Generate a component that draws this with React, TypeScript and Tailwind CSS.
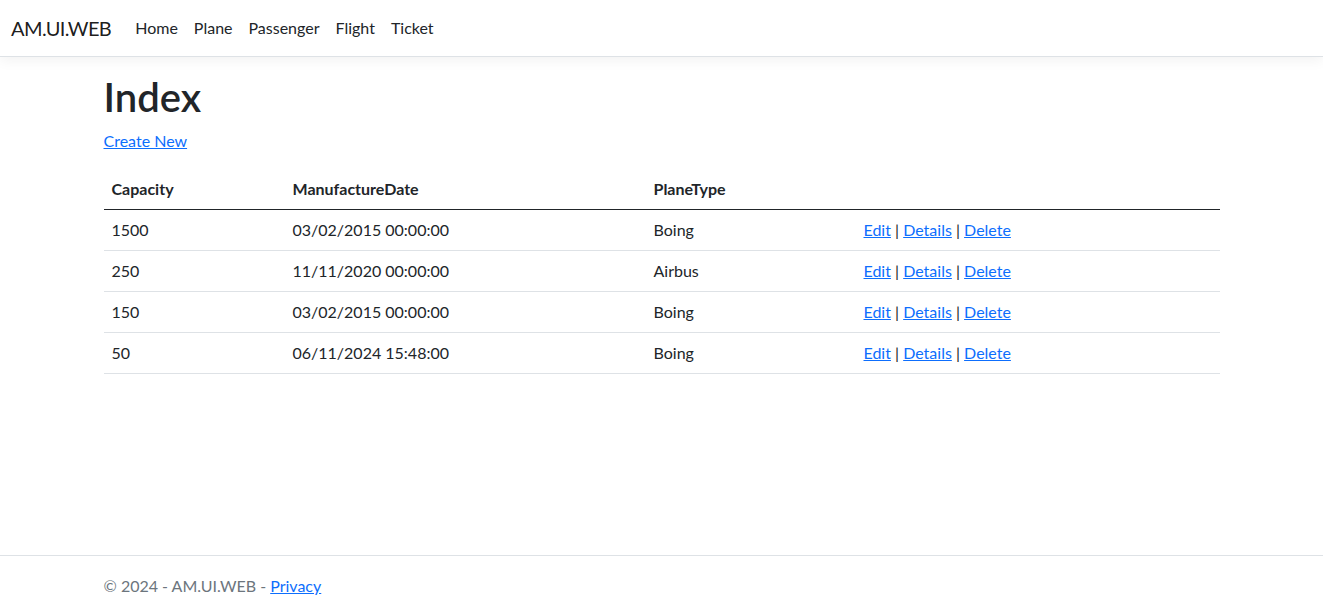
import React from 'react'

type Plane = {
  capacity: number
  date: string
  type: string
}

const planes: Plane[] = [
  { capacity: 1500, date: '03/02/2015 00:00:00', type: 'Boing' },
  { capacity: 250, date: '11/11/2020 00:00:00', type: 'Airbus' },
  { capacity: 150, date: '03/02/2015 00:00:00', type: 'Boing' },
  { capacity: 50, date: '06/11/2024 15:48:00', type: 'Boing' },
]

const navLinks = ['Home', 'Plane', 'Passenger', 'Flight', 'Ticket']

const Navbar = () => {
  return (
    <nav className="bg-white border-b border-[#dee2e6] shadow-[0_4px_12px_rgba(0,0,0,0.05)] mb-4">
      <div className="flex items-center pl-[11px] pr-3 py-2">
        <a href="#" className="text-[20px] leading-[30px] py-[5px] mr-4 tracking-[-0.6px] text-black/90">
          AM.UI.WEB
        </a>
        <ul className="flex items-center">
          {navLinks.map((link) => (
            <li key={link}>
              <a href="#" className="block px-2 py-2 leading-6 text-[#212529]">
                {link}
              </a>
            </li>
          ))}
        </ul>
      </div>
    </nav>
  )
}

const Actions = () => (
  <>
    <a href="#" className="text-[#0d6efd] underline">Edit</a> |{' '}
    <a href="#" className="text-[#0d6efd] underline">Details</a> |{' '}
    <a href="#" className="text-[#0d6efd] underline">Delete</a>
  </>
)

export default function App() {
  return (
    <div
      className="min-h-screen flex flex-col bg-white text-[#212529] text-base leading-6"
      style={{ fontFamily: 'Lato, "Noto Sans", sans-serif' }}
    >
      <Navbar />

      <main className="w-full max-w-[1140px] mx-auto px-3 pb-4">
        <h1 className="text-[40px] leading-[48px] font-semibold mb-2">Index</h1>
        <p className="mb-4">
          <a href="#" className="text-[#0d6efd] underline">Create New</a>
        </p>

        <table className="w-full border-collapse text-left">
          <thead>
            <tr className="border-b border-[#212529]">
              <th className="w-[181px] p-2 font-bold">Capacity</th>
              <th className="w-[361px] p-2 font-bold">ManufactureDate</th>
              <th className="w-[210px] p-2 font-bold">PlaneType</th>
              <th className="p-2"></th>
            </tr>
          </thead>
          <tbody>
            {planes.map((p, i) => (
              <tr key={i} className="border-b border-[#dee2e6]">
                <td className="p-2">{p.capacity}</td>
                <td className="p-2">{p.date}</td>
                <td className="p-2">{p.type}</td>
                <td className="p-2">
                  <Actions />
                </td>
              </tr>
            ))}
          </tbody>
        </table>
      </main>

      <footer className="mt-auto h-[60px] border-t border-[#dee2e6] text-[#6c757d] whitespace-nowrap">
        <div className="max-w-[1140px] mx-auto px-3 leading-[59px]">
          © 2024 - AM.UI.WEB - <a href="#" className="text-[#0d6efd] underline">Privacy</a>
        </div>
      </footer>
    </div>
  )
}
